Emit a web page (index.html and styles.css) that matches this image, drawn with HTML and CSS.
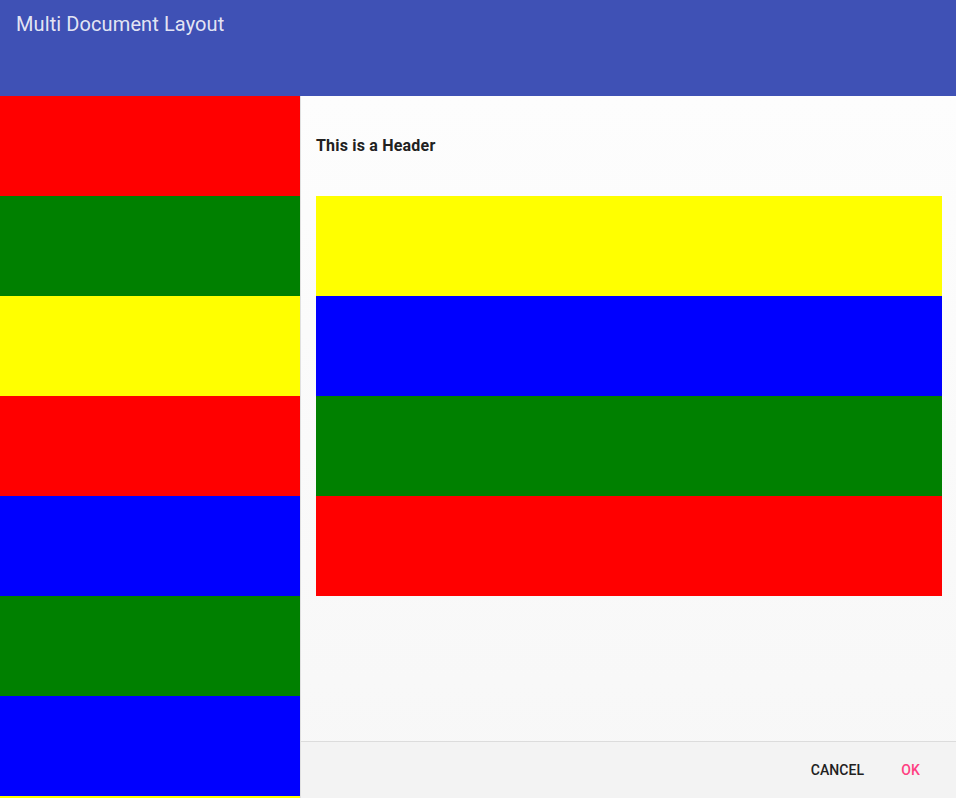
FILE: index.html
```html
<!DOCTYPE html>
<html>
<head>
<meta charset="utf-8">
<link rel="stylesheet" href="styles.css">
</head>
<body>
<header class="toolbar"><span class="title">Multi Document Layout</span></header>
<div class="main">
  <aside class="side">
    <div class="blk red"></div>
    <div class="blk green"></div>
    <div class="blk yellow"></div>
    <div class="blk red"></div>
    <div class="blk blue"></div>
    <div class="blk green"></div>
    <div class="blk blue"></div>
    <div class="blk yellow"></div>
  </aside>
  <section class="doc">
    <div class="doc-body">
      <h2 class="doc-header">This is a Header</h2>
      <div class="stack">
        <div class="blk yellow"></div>
        <div class="blk blue"></div>
        <div class="blk green"></div>
        <div class="blk red"></div>
      </div>
    </div>
    <footer class="actions">
      <button class="btn">CANCEL</button>
      <button class="btn ok">OK</button>
    </footer>
  </section>
</div>
</body>
</html>
```
FILE: styles.css
```css
html, body { margin: 0; padding: 0; height: 100%; }
body { font-family: Roboto, "Noto Sans", sans-serif; overflow: hidden; display: flex; flex-direction: column; }
.toolbar { height: 96px; background: #3f51b5; flex: none; box-sizing: border-box; padding: 12px 16px; }
.title { color: rgba(255,255,255,0.87); font-size: 20px; line-height: 24px; letter-spacing: 0.1px; }
.main { flex: 1; display: flex; min-height: 0; }
.side { width: 300px; flex: none; overflow: hidden; border-right: 1px solid #e0e0e0; }
.blk { height: 100px; }
.red { background: #ff0000; }
.green { background: #008000; }
.yellow { background: #ffff00; }
.blue { background: #0000ff; }
.doc { flex: 1; display: flex; flex-direction: column; background: linear-gradient(#fdfdfd, #f7f7f7); }
.doc-body { flex: 1; padding: 0 14px 0 15px; }
.doc-header { margin: 0; padding-top: 40px; height: 60px; box-sizing: border-box; font-size: 16px; line-height: 20px; font-weight: 700; letter-spacing: 0.2px; color: #212121; }
.stack { margin-top: 40px; }
.actions { height: 56px; border-top: 1px solid #dcdcdc; display: flex; justify-content: flex-end; align-items: center; padding-right: 18px; background: #f3f3f3; }
.btn { border: 0; background: transparent; font-family: Roboto, sans-serif; font-weight: 500; font-size: 14px; color: #212121; padding: 0 18px; height: 36px; letter-spacing: 0.1px; }
.ok { color: #ff4081; margin-left: 1px; }
```
